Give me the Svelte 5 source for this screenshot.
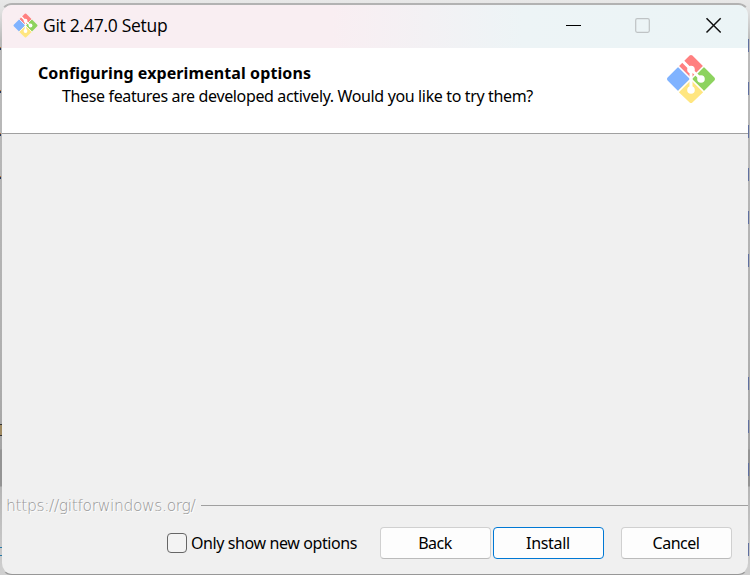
<script>
  const leftMarks = [47, 90, 133, 176];
  const rightMarks = [39, 82, 125, 168, 211, 254, 377, 420, 463, 543];
</script>

{#snippet logo(size)}
  <svg class="logo" width={size} height={size} viewBox="0 0 50 50" aria-hidden="true">
    <g stroke-width="4" stroke-linejoin="round">
      <path d="M25 3 35.5 13.5 25 24 14.5 13.5Z" fill="#ff8080" stroke="#ff8080" />
      <path d="M13 15 23 25 13 35 3 25Z" fill="#80b3ff" stroke="#80b3ff" />
      <path d="M37 15 47 25 37 35 27 25Z" fill="#8dd35f" stroke="#8dd35f" />
      <path d="M25 27 35.5 37 25 47 14.5 37Z" fill="#ffe680" stroke="#ffe680" />
    </g>
    <path d="M12.3 37.7 37.7 12.3M12.3 12.3 37.7 37.7" stroke="#fff" stroke-width="1.6" />
    <path d="M16 6.5 25 15.5 35 25M25 16V36" fill="none" stroke="#fff" stroke-width="3" />
    <circle cx="25" cy="15.5" r="3.8" fill="#fff" />
    <circle cx="35" cy="25" r="3.8" fill="#fff" />
    <circle cx="25" cy="36" r="3.8" fill="#fff" />
  </svg>
{/snippet}

<div class="desktop">
  {#each leftMarks as y}<i class="mark left" style="top:{y}px"></i>{/each}
  {#each rightMarks as y}<i class="mark right" style="top:{y}px"></i>{/each}
  <i class="edge warm"></i>
  <i class="edge cool"></i>
  <main class="window">
    <header class="titlebar">
      {@render logo(25)}
      <span class="title">Git 2.47.0 Setup</span>
      <svg class="controls" width="156" height="17" viewBox="0 0 156 17" fill="none">
        <path d="M0 8.5H15" stroke="#000" />
        <rect x="69.7" y="1.7" width="13.6" height="13.6" rx="1.5" stroke="#bfc3c5" stroke-width="1.2" />
        <path d="M140.5 1.3 154.7 15.5M154.7 1.3 140.5 15.5" stroke="#111" stroke-width="1.5" />
      </svg>
    </header>
    <section class="banner">
      <div>
        <h1>Configuring experimental options</h1>
        <p>These features are developed actively. Would you like to try them?</p>
      </div>
      {@render logo(50)}
    </section>
    <section class="body"></section>
    <div class="divider"><span class="url">https://gitforwindows.org/</span><hr /></div>
    <footer>
      <label><span class="box"></span><span class="only">Only show new options</span></label>
      <button>Back</button>
      <button class="primary">Install</button>
      <button class="cancel">Cancel</button>
    </footer>
  </main>
</div>

<style>
  .desktop {
    position: relative;
    box-sizing: border-box;
    width: 750px;
    height: 575px;
    padding: 3px 0 0;
    overflow: hidden;
    background: linear-gradient(#e8e8e8 0, #e4e4e4 8px, #bbb 40px, #b0b0b0 350px, #a5a5a5 449px, #949494 450px, #949494 486px, #b5b5b5 487px, #d0d0d0);
    font: 16px/20px "Noto Sans", sans-serif;
    color: #000;
  }
  .mark { position: absolute; z-index: 0; }
  .mark.left { left: 0; width: 1px; height: 2px; background: #26385b; border-top: 1px solid #b5763c; }
  .mark.right { right: 1px; width: 1px; height: 13px; background: #6070a0; z-index: 2; }
  .edge { position: absolute; left: 0; width: 2px; }
  .edge.warm { top: 424px; height: 10px; background: #a08b63; border-block: 1px solid #333; }
  .edge.cool { top: 547px; height: 7px; border-block: 1px solid #247aa8; }
  .window {
    position: relative;
    box-sizing: border-box;
    display: flex;
    flex-direction: column;
    width: 750px;
    height: 572px;
    border: 2px solid #b2b2b2;
    border-bottom: 1px solid #979797;
    border-left-color: transparent;
    border-right-color: transparent;
    border-radius: 12px;
    overflow: hidden;
    background: #f0f0f0;
    background-clip: padding-box;
  }
  .titlebar {
    display: flex;
    height: 43px;
    flex: none;
    background: linear-gradient(90deg, #f9eef2 0, #f9eef2 330px, #edf4f6 520px, #ebf4f6);
  }
  .titlebar .logo { margin: 8px 5px 0 11px; }
  .title { font-family: "Open Sans", sans-serif; font-size: 17.5px; line-height: 24px; margin-top: 8px; letter-spacing: -.27px; white-space: nowrap; }
  .controls { margin: 12px 26px 0 auto; }
  .banner {
    box-sizing: border-box;
    display: flex;
    justify-content: space-between;
    flex: none;
    height: 86px;
    padding: 6px 32px 0 36px;
    background: #fff;
    border-bottom: 1px solid #a0a0a0;
  }
  h1 { margin: 9px 0 0; font-size: 16px; line-height: 20px; font-weight: 700; letter-spacing: .09px; white-space: nowrap; }
  p { margin: 3px 0 0 24px; font-size: 16px; line-height: 20px; letter-spacing: -.36px; white-space: nowrap; }
  .body { flex: 1; }
  .divider { display: flex; align-items: center; height: 20px; padding-left: 4px; }
  .url { padding-top: 2px; font-family: "DejaVu Sans", sans-serif; font-weight: 200; font-size: 15.5px; letter-spacing: -.35px; color: #999; text-shadow: 1px 1px #fff; white-space: nowrap; }
  hr { flex: 1; margin: 0 0 0 6px; border: 0; height: 1px; background: #a0a0a0; }
  footer { display: flex; height: 47px; margin-top: 12px; padding-right: 16px; justify-content: flex-end; align-items: flex-start; }
  label { display: flex; align-items: center; height: 32px; margin-right: auto; padding-left: 165px; white-space: nowrap; }
  .box { box-sizing: border-box; width: 20px; height: 20px; border: 1px solid #666; border-radius: 4px; background: #f3f3f3; margin-right: 4px; }
  .only { letter-spacing: -.4px; }
  button { box-sizing: border-box; width: 111px; height: 32px; padding: 0 1px 0 0; border: 1px solid #d0d0d0; border-bottom-color: #bbb; border-radius: 4px; background: #fdfdfd; font: inherit; letter-spacing: -.5px; color: #000; }
  .primary { margin-left: 2px; border-color: #0078d4; letter-spacing: -.3px; }
  .cancel { margin-left: 17px; }
</style>
